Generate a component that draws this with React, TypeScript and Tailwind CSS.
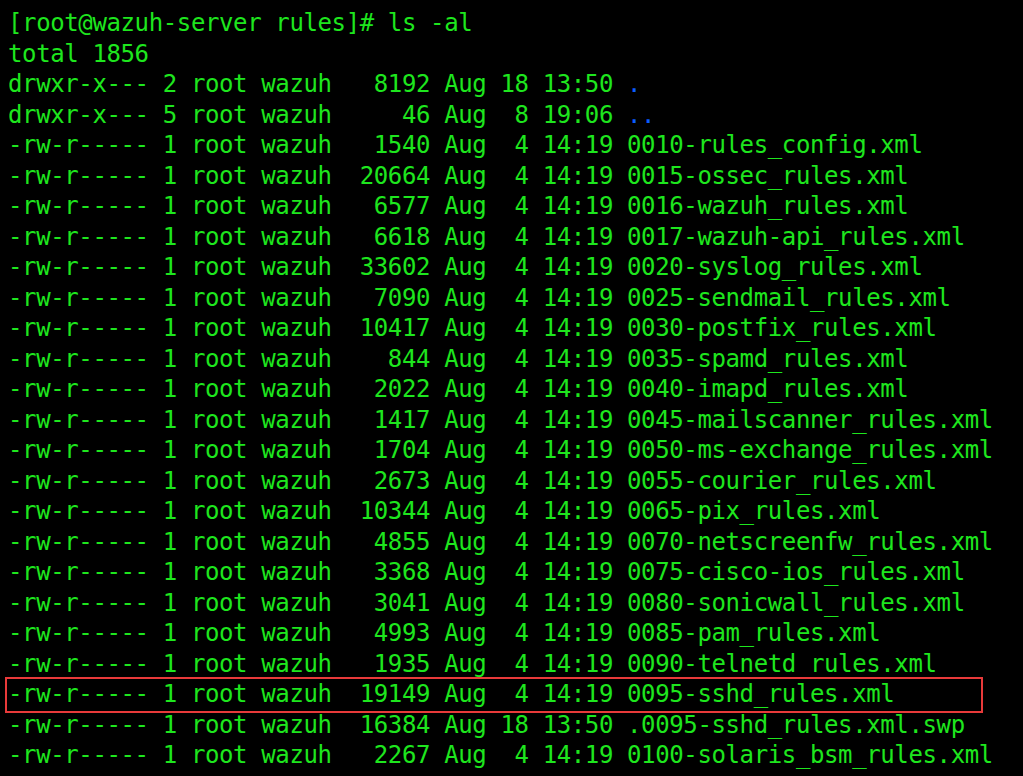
const LINES: string[] = [
  "-rw-r----- 1 root wazuh   1540 Aug  4 14:19 0010-rules_config.xml",
  "-rw-r----- 1 root wazuh  20664 Aug  4 14:19 0015-ossec_rules.xml",
  "-rw-r----- 1 root wazuh   6577 Aug  4 14:19 0016-wazuh_rules.xml",
  "-rw-r----- 1 root wazuh   6618 Aug  4 14:19 0017-wazuh-api_rules.xml",
  "-rw-r----- 1 root wazuh  33602 Aug  4 14:19 0020-syslog_rules.xml",
  "-rw-r----- 1 root wazuh   7090 Aug  4 14:19 0025-sendmail_rules.xml",
  "-rw-r----- 1 root wazuh  10417 Aug  4 14:19 0030-postfix_rules.xml",
  "-rw-r----- 1 root wazuh    844 Aug  4 14:19 0035-spamd_rules.xml",
  "-rw-r----- 1 root wazuh   2022 Aug  4 14:19 0040-imapd_rules.xml",
  "-rw-r----- 1 root wazuh   1417 Aug  4 14:19 0045-mailscanner_rules.xml",
  "-rw-r----- 1 root wazuh   1704 Aug  4 14:19 0050-ms-exchange_rules.xml",
  "-rw-r----- 1 root wazuh   2673 Aug  4 14:19 0055-courier_rules.xml",
  "-rw-r----- 1 root wazuh  10344 Aug  4 14:19 0065-pix_rules.xml",
  "-rw-r----- 1 root wazuh   4855 Aug  4 14:19 0070-netscreenfw_rules.xml",
  "-rw-r----- 1 root wazuh   3368 Aug  4 14:19 0075-cisco-ios_rules.xml",
  "-rw-r----- 1 root wazuh   3041 Aug  4 14:19 0080-sonicwall_rules.xml",
  "-rw-r----- 1 root wazuh   4993 Aug  4 14:19 0085-pam_rules.xml",
  "-rw-r----- 1 root wazuh   1935 Aug  4 14:19 0090-telnetd_rules.xml",
];

const TAIL: string[] = [
  "-rw-r----- 1 root wazuh  16384 Aug 18 13:50 .0095-sshd_rules.xml.swp",
  "-rw-r----- 1 root wazuh   2267 Aug  4 14:19 0100-solaris_bsm_rules.xml",
];

export default function App() {
  return (
    <div
      className="w-[1023px] h-[776px] overflow-hidden bg-black text-[#1ee61e] pl-[8px] pt-[8px] text-[24px] leading-[30.5px] tracking-[-0.38px] whitespace-pre"
      style={{ fontFamily: '"DejaVu Sans Mono", "Liberation Mono", monospace' }}
    >
      <div>[root@wazuh-server rules]# ls -al</div>
      <div>total 1856</div>
      <div>
        drwxr-x--- 2 root wazuh   8192 Aug 18 13:50 <span className="text-[#0a5cff]">.</span>
      </div>
      <div>
        drwxr-x--- 5 root wazuh     46 Aug  8 19:06 <span className="text-[#0a5cff]">..</span>
      </div>
      {LINES.map((l) => (
        <div key={l}>{l}</div>
      ))}
      {/* highlighted row */}
      <div className="relative">
        -rw-r----- 1 root wazuh  19149 Aug  4 14:19 0095-sshd_rules.xml
        <span className="absolute -left-[3px] -top-[2px] w-[978px] h-[36px] border-2 border-[#e83a3a]" />
      </div>
      {TAIL.map((l) => (
        <div key={l}>{l}</div>
      ))}
    </div>
  );
}
